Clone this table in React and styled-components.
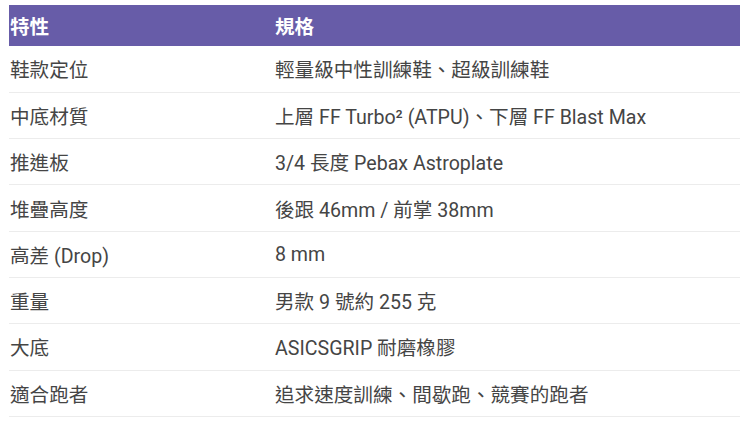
import React from 'react';
import styled, { createGlobalStyle } from 'styled-components';

const GlobalStyle = createGlobalStyle`
  html, body {
    margin: 0;
    padding: 0;
    background: #fff;
  }
  body {
    font-family: Roboto, "Noto Sans CJK TC", "Noto Sans", sans-serif;
  }
`;

const Wrapper = styled.div`
  padding: 5px 0 0 9px;
  overflow: hidden;
`;

const Table = styled.table`
  width: 740px;
  border-collapse: collapse;
  font-size: 19.6px;
  color: #454545;
`;

const HeadRow = styled.tr`
  background: #675ca8;
  height: 41px;
`;

const HeadCell = styled.th`
  padding: 0 0 0 1px;
  text-align: left;
  color: #fff;
  font-weight: 700;
  width: ${props => props.width || 'auto'};
`;

const Row = styled.tr`
  height: 46.3px;
  border-bottom: 1px solid #ececec;
`;

const Cell = styled.td`
  padding: 0 0 0 1px;
  vertical-align: middle;
`;

const specs = [
  ['鞋款定位', '輕量級中性訓練鞋、超級訓練鞋'],
  ['中底材質', '上層 FF Turbo² (ATPU)、下層 FF Blast Max'],
  ['推進板', '3/4 長度 Pebax Astroplate'],
  ['堆疊高度', '後跟 46mm / 前掌 38mm'],
  ['高差 (Drop)', '8 mm'],
  ['重量', '男款 9 號約 255 克'],
  ['大底', 'ASICSGRIP 耐磨橡膠'],
  ['適合跑者', '追求速度訓練、間歇跑、競賽的跑者']
];

const App = () => (
  <Wrapper>
    <GlobalStyle />
    <Table>
      <thead>
        <HeadRow>
          <HeadCell width="264px">特性</HeadCell>
          <HeadCell>規格</HeadCell>
        </HeadRow>
      </thead>
      <tbody>
        {specs.map(([feature, value]) => (
          <Row key={feature}>
            <Cell>{feature}</Cell>
            <Cell>{value}</Cell>
          </Row>
        ))}
      </tbody>
    </Table>
  </Wrapper>
);

export default App;
